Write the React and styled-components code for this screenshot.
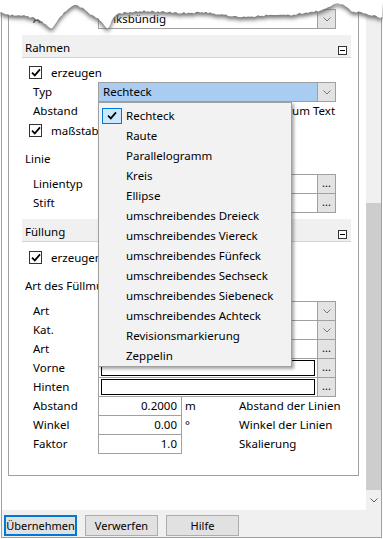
import React from 'react';
import styled, { createGlobalStyle } from 'styled-components';

const Global = createGlobalStyle`
  html, body { margin: 0; padding: 0; background: #ffffff; }
  body {
    font-family: "Noto Sans", "Segoe UI", sans-serif;
    font-size: 11.5px;
    color: #000;
  }
  * { box-sizing: border-box; }
`;

const Stage = styled.div`
  position: relative;
  width: 383px;
  height: 539px;
  overflow: hidden;
  background: #fff;
`;

const Window = styled.div`
  margin-left: 1px;
  width: 381px;
  height: 538px;
  border: 1px solid #a0a0a0;
  border-top: none;
  display: flex;
  flex-direction: column;
  background: #f0f0f0;
`;

const Body = styled.div`
  display: flex;
  height: 510px;
`;

const Main = styled.div`
  width: 364px;
  background: #fff;
  padding: 0 6px;
`;

const Panel = styled.div`
  width: 351px;
  height: 476px;
  border: 1px solid #a0a0a0;
  border-top: none;
  padding: 9px 7px 0 13px;
`;

const Row = styled.div`
  display: grid;
  grid-template-columns: 76px 238px;
  height: 19px;
  align-items: start;
`;

const NumRow = styled.div`
  display: grid;
  grid-template-columns: 76px 84px 57px auto;
  height: 19px;
  align-items: start;
`;

const Label = styled.div`
  padding-left: 11px;
  line-height: 19px;
  white-space: nowrap;
`;

const Field = styled.div`
  height: 20px;
  border: 1px solid #a0a0a0;
  background: ${p => (p.$selected ? '#a9cdf0' : '#fff')};
  display: flex;
  align-items: stretch;
`;

const FieldText = styled.div`
  flex: 1;
  padding-left: 4px;
  line-height: 18px;
  white-space: nowrap;
  overflow: hidden;
`;

const SideButton = styled.div`
  width: 18px;
  border-left: 1px solid #a0a0a0;
  background: #e3e3e3;
  display: flex;
  align-items: center;
  justify-content: center;
  font-size: 11px;
  line-height: 1;
  color: #000;
  padding-bottom: ${p => (p.$dots ? '3px' : '0')};
`;

const Swatch = styled.div`
  flex: 1;
  margin: 1px 2px 1px 2px;
  border: 1px solid #000;
  background: #fff;
`;

const NumField = styled.div`
  height: 20px;
  border: 1px solid #a0a0a0;
  background: #fff;
  text-align: right;
  padding-right: 4px;
  line-height: 18px;
`;

const Unit = styled.div`
  padding-left: 3px;
  line-height: 19px;
`;

const Desc = styled.div`
  line-height: 19px;
  white-space: nowrap;
`;

const Section = styled.div`
  margin-top: 7px;
`;

const Header = styled.div`
  height: 23px;
  background: #f0f0f0;
  border-bottom: 1px solid #d4d4d4;
  display: flex;
  align-items: center;
  justify-content: space-between;
  padding: 2px 4px 0 3px;
`;

const Collapse = styled.div`
  width: 9px;
  height: 9px;
  border: 1px solid #333;
  background: #fff;
  margin-top: 6px;
  display: flex;
  align-items: center;
  justify-content: center;
  &::after {
    content: '';
    width: 5px;
    height: 1px;
    background: #000;
  }
`;

const CheckRow = styled.div`
  display: flex;
  align-items: center;
  height: 20px;
  margin-top: ${p => p.$top || 0}px;
  padding-left: 7px;
  white-space: nowrap;
`;

const Box = styled.div`
  width: 13px;
  height: 13px;
  border: 1px solid #333;
  background: #fff;
  display: flex;
  align-items: center;
  justify-content: center;
  margin-right: 9px;
`;

const GroupLabel = styled.div`
  height: 19px;
  line-height: 19px;
  padding-left: 3px;
  margin: ${p => p.$top}px 0 6px 0;
  white-space: nowrap;
`;

const Scrollbar = styled.div`
  width: 15px;
  background: #f0f0f0;
  display: flex;
  flex-direction: column;
`;

const Thumb = styled.div`
  margin-top: 203px;
  height: 287px;
  background: #cdcdcd;
`;

const Arrow = styled.div`
  height: 20px;
  display: flex;
  align-items: center;
  justify-content: center;
`;

const ButtonBar = styled.div`
  height: 27px;
  display: flex;
  gap: 8px;
  padding: 5px 0 0 2px;
`;

const Button = styled.div`
  width: 73px;
  height: 21px;
  border: ${p => (p.$default ? '2px solid #0078d7' : '1px solid #adadad')};
  background: #e1e1e1;
  display: flex;
  align-items: center;
  justify-content: center;
  white-space: nowrap;
  font-size: 11px;
`;

const Popup = styled.div`
  position: absolute;
  left: 98px;
  top: 102px;
  width: 194px;
  height: 265px;
  background: #f2f2f2;
  border: 1px solid #a0a0a0;
  box-shadow: 2px 2px 3px rgba(0, 0, 0, 0.35);
  padding: 2px 0;
`;

const Item = styled.div`
  height: 20px;
  display: flex;
  align-items: center;
  white-space: nowrap;
  padding-top: 1px;
`;

const CheckCell = styled.div`
  width: 27px;
  padding-left: 3px;
  display: flex;
  align-items: center;
`;

const CheckMark = styled.div`
  width: 20px;
  height: 16px;
  border: 1px solid #0078d7;
  background: #cce8ff;
  display: flex;
  align-items: center;
  justify-content: center;
`;

const Torn = styled.svg`
  position: absolute;
  left: 0;
  top: 0;
`;

const Check = () => (
  <svg width="10" height="9" viewBox="0 0 10 9">
    <path d="M1 4.6 L3.8 7.4 L9 1.4" fill="none" stroke="#000" strokeWidth="1.7" />
  </svg>
);

const Chevron = ({ color = '#777' }) => (
  <svg width="8" height="5" viewBox="0 0 8 5">
    <path d="M0.5 0.5 L4 4 L7.5 0.5" fill="none" stroke={color} strokeWidth="1" />
  </svg>
);

const Combo = ({ text, selected }) => (
  <Field $selected={selected}>
    <FieldText>{text}</FieldText>
    <SideButton>
      <Chevron />
    </SideButton>
  </Field>
);

const Browse = ({ text, swatch }) => (
  <Field>
    {swatch ? <Swatch /> : <FieldText>{text}</FieldText>}
    <SideButton $dots>...</SideButton>
  </Field>
);

const CheckBox = ({ label, top }) => (
  <CheckRow $top={top}>
    <Box>
      <Check />
    </Box>
    {label}
  </CheckRow>
);

const Num = ({ label, value, unit, desc }) => (
  <NumRow>
    <Label>{label}</Label>
    <NumField>{value}</NumField>
    <Unit>{unit}</Unit>
    <Desc>{desc}</Desc>
  </NumRow>
);

const KEYS = [
  [0, 13], [10, 15], [20, 15], [30, 17], [38, 19], [44, 23], [48, 27], [51, 29], [54, 26],
  [58, 20], [62, 15], [66, 11], [70, 8], [75, 5], [80, 7], [85, 10], [90, 14], [95, 16],
  [100, 21], [104, 25], [107, 29], [110, 26], [113, 18], [117, 14], [122, 13], [130, 12],
  [145, 11], [165, 12], [185, 13], [205, 12], [225, 15], [240, 17], [255, 16], [270, 15],
  [290, 15], [305, 13], [318, 11], [326, 8], [332, 5], [338, 3], [344, 5], [349, 9],
  [353, 12], [360, 12], [368, 14], [376, 16], [383, 18],
];

function edgePath() {
  const pts = [];
  for (let x = 0; x <= 383; x += 2) {
    let k = 0;
    while (k < KEYS.length - 2 && KEYS[k + 1][0] < x) k++;
    const [x0, y0] = KEYS[k];
    const [x1, y1] = KEYS[k + 1];
    const t = Math.min(1, Math.max(0, (x - x0) / (x1 - x0)));
    const s = Math.sin(x * 12.9898) * 43758.5453;
    const j = (s - Math.floor(s) - 0.5) * 1.8;
    pts.push(`${x},${(y0 + (y1 - y0) * t + j).toFixed(1)}`);
  }
  return `M0,0 L${pts.join(' L')} L383,0 Z`;
}

const EDGE = edgePath();

const ITEMS = [
  'Rechteck', 'Raute', 'Parallelogramm', 'Kreis', 'Ellipse',
  'umschreibendes Dreieck', 'umschreibendes Viereck', 'umschreibendes Fünfeck',
  'umschreibendes Sechseck', 'umschreibendes Siebeneck', 'umschreibendes Achteck',
  'Revisionsmarkierung', 'Zeppelin',
];

export default function App() {
  return (
    <Stage>
      <Global />
      <Window>
        <Body>
          <Main>
            <Panel>
              <Row>
                <Label>Art</Label>
                <Combo text="linksbündig" />
              </Row>

              <Section>
                <Header>
                  <span>Rahmen</span>
                  <Collapse />
                </Header>
                <CheckBox label="erzeugen" top={4} />
                <Row>
                  <Label>Typ</Label>
                  <Combo text="Rechteck" selected />
                </Row>
                <Num label="Abstand" value="" unit="" desc="Abstand zum Text" />
                <CheckBox label="maßstabsgetreu" />
                <GroupLabel $top={9}>Linie</GroupLabel>
                <Row>
                  <Label>Linientyp</Label>
                  <Browse text="" />
                </Row>
                <Row>
                  <Label>Stift</Label>
                  <Browse text="" />
                </Row>
              </Section>

              <Section>
                <Header>
                  <span>Füllung</span>
                  <Collapse />
                </Header>
                <CheckBox label="erzeugen" top={5} />
                <GroupLabel $top={9}>Art des Füllmusters</GroupLabel>
                <Row>
                  <Label>Art</Label>
                  <Combo text="" />
                </Row>
                <Row>
                  <Label>Kat.</Label>
                  <Combo text="" />
                </Row>
                <Row>
                  <Label>Art</Label>
                  <Browse text="" />
                </Row>
                <Row>
                  <Label>Vorne</Label>
                  <Browse swatch />
                </Row>
                <Row>
                  <Label>Hinten</Label>
                  <Browse swatch />
                </Row>
                <Num label="Abstand" value="0.2000" unit="m" desc="Abstand der Linien" />
                <Num label="Winkel" value="0.00" unit="°" desc="Winkel der Linien" />
                <Num label="Faktor" value="1.0" unit="" desc="Skalierung" />
              </Section>
            </Panel>
          </Main>
          <Scrollbar>
            <Thumb />
            <Arrow>
              <Chevron color="#606060" />
            </Arrow>
          </Scrollbar>
        </Body>
        <ButtonBar>
          <Button $default>Übernehmen</Button>
          <Button>Verwerfen</Button>
          <Button>Hilfe</Button>
        </ButtonBar>
      </Window>

      <Popup>
        {ITEMS.map((t, i) => (
          <Item key={t}>
            <CheckCell>
              {i === 0 && (
                <CheckMark>
                  <Check />
                </CheckMark>
              )}
            </CheckCell>
            {t}
          </Item>
        ))}
      </Popup>

      <Torn width="383" height="44" viewBox="0 0 383 44">
        <defs>
          <filter id="tornBlur" x="-5%" y="-50%" width="110%" height="200%">
            <feGaussianBlur stdDeviation="2.2" />
          </filter>
        </defs>
        <path d={EDGE} fill="#707070" transform="translate(0,3)" filter="url(#tornBlur)" />
        <path d={EDGE} fill="#ffffff" />
      </Torn>
    </Stage>
  );
}
